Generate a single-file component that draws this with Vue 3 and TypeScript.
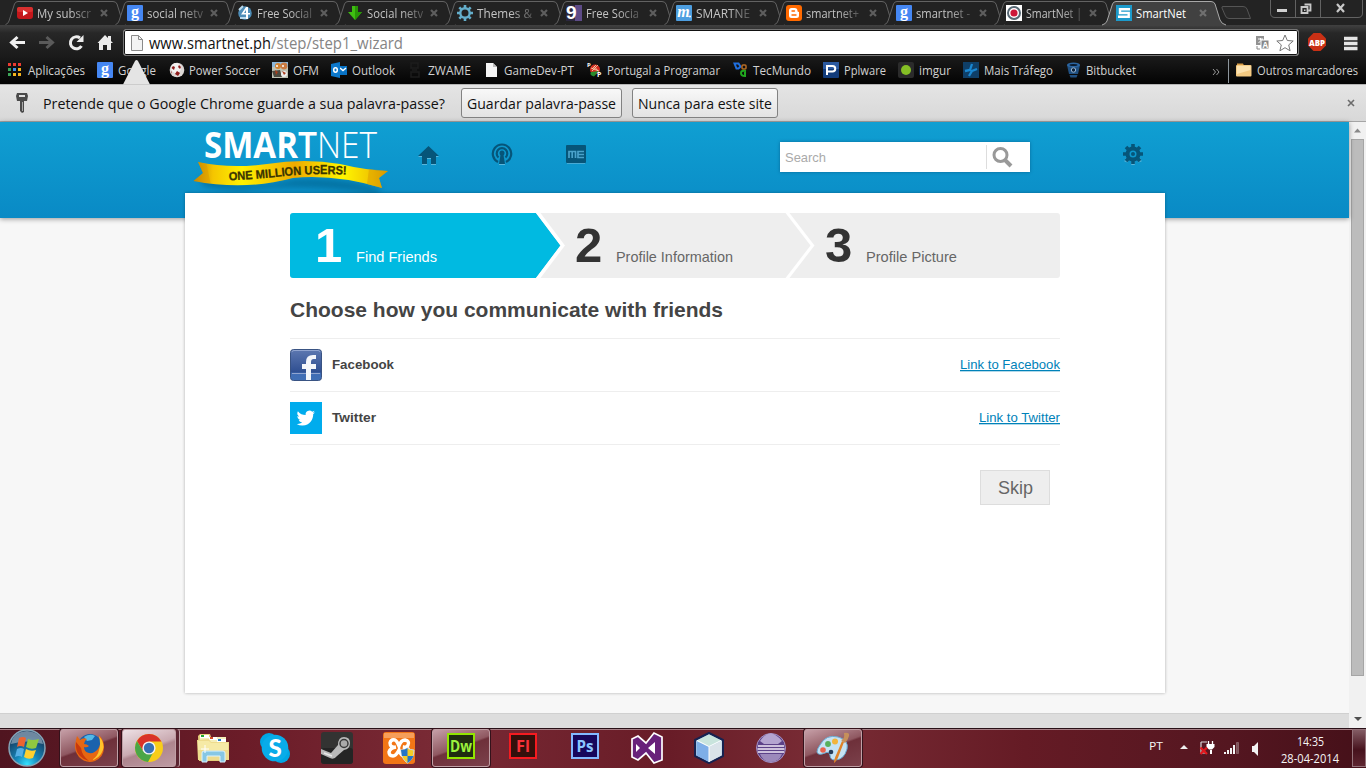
<script setup lang="ts">
import { h } from 'vue'

interface Tab { icon: string; title: string; w: number }
interface Bookmark { icon: string; title: string; w: number; slot: number; gap: number }
interface Task { icon: string; state: string }

/* Single line of text set to an exact measure */
const Fit = (p: { t: string; w: number; s: number }) =>
  h('svg', { class: 'fit', width: p.w, height: Math.round(p.s * 1.5) }, [
    h('text', { x: 0, y: Math.round(p.s * 1.15), 'font-size': p.s, textLength: p.w, lengthAdjust: 'spacingAndGlyphs' }, p.t),
  ])
Fit.props = ['t', 'w', 's']

const google = '<rect width="16" height="16" rx="1" fill="#4587f3"/><text x="8" y="11.500" font-family="Liberation Serif" font-weight="700" font-size="16" text-anchor="middle" fill="#fff">g</text>'

const icons: Record<string, string> = {
  google,
  youtube: '<rect y="2" width="16" height="12" rx="3" fill="#c4171b"/><rect y="2" width="16" height="5" rx="2" fill="#d8302f"/><path d="M6 5l5 3-5 3z" fill="#fff"/>',
  four: '<circle cx="8" cy="8" r="6.800" fill="#4d8db8"/><path d="M2 5l4-4M3 13h8" stroke="#b9d9ec" stroke-width="2"/><path d="M9 2L4 9.500h5V14h2V9.500h2V8h-2V2z" fill="#fff"/><path d="M9 5V8H7z" fill="#4d8db8"/>',
  down: '<path d="M5 1h6v6h4l-7 8-7-8h4z" fill="#3fbd12"/><path d="M8 1h3v6h4l-7 8z" fill="#289506"/>',
  cog: '<circle cx="8" cy="8" r="4.700" fill="none" stroke="#64aecb" stroke-width="2.400"/><path d="M8 0v3M8 13v3M0 8h3M13 8h3M2.300 2.300l2 2M11.700 11.700l2 2M2.300 13.700l2-2M11.700 4.300l2-2" stroke="#64aecb" stroke-width="2.600"/>',
  nine: '<path d="M0 0h16v16H0z" fill="#5d4b87"/><path d="M0 0h9v16H0z" fill="#2b2740"/><text x="0" y="14" font-family="Liberation Sans" font-weight="700" font-size="19" fill="#fff">9</text>',
  m: '<rect width="16" height="16" rx="1" fill="#4d9ee0"/><text x="7.500" y="12" font-family="Liberation Serif" font-style="italic" font-weight="700" font-size="16" text-anchor="middle" fill="#fff">m</text><circle cx="14" cy="11.500" r="1" fill="#fff"/>',
  blogger: '<rect width="16" height="16" rx="3" fill="#ff6a00"/><path d="M5.500 3h3A3 3 0 0 1 11.500 6q0 1 1.500 1v3.500A2.500 2.500 0 0 1 10.500 13h-5A2.500 2.500 0 0 1 3 10.500v-5A2.500 2.500 0 0 1 5.500 3z" fill="#fff"/><path d="M6 6h2.500M6 10h4" stroke="#ff6a00" stroke-width="1.400" stroke-linecap="round"/>',
  target: '<path d="M0 0h16v16H0z" fill="#fff"/><circle cx="8" cy="8" r="6" fill="#fff" stroke="#566773" stroke-width="2"/><circle cx="8" cy="8" r="3.600" fill="#cc1738"/>',
  smart: '<rect width="16" height="16" fill="#1c9acb"/><path d="M14 4.300H4v3.700h8.700v3.700H2" fill="none" stroke="#fff" stroke-width="2.400"/>',
  apps: '<path d="M0 1h3v3H0zM5 1h3v3H5zM10 1h3v3h-3z" fill="#ed3b31"/><path d="M0 6h3v3H0zM0 11h3v3H0z" fill="#3ca658"/><path d="M5 6h3v3H5z" fill="#3f8ee8"/><path d="M10 6h3v3h-3zM5 11h3v3H5zM10 11h3v3h-3z" fill="#f5b31d"/>',
  soccer: '<circle cx="8" cy="8" r="7.300" fill="#dcd7d5"/><circle cx="7" cy="6" r="5" fill="#f4f2f1"/><path d="M2.500 6l1.500-2 2 1-1 3zM10 3l2 2-1 2-2-2zM8 9l3 2-2 3-3-2zM2 9l1 1v2z" fill="#8e1c1c"/>',
  ofm: '<path d="M0 0h16v16H0z" fill="#bfc2b4"/><path d="M0 0h16v5H0z" fill="#8bb6d8"/><circle cx="6" cy="4" r="3" fill="#d38331"/><circle cx="12" cy="4" r="3.400" fill="#c97a42"/><path d="M0 9l8-1 2 7H2z" fill="#4c4b40"/><circle cx="12" cy="12" r="3" fill="#eee"/><path d="M3 8l3 2-2 3zM10 9l4 2-2 2z" fill="#a93e1d"/><circle cx="5" cy="4" r="1" fill="#fff"/><circle cx="11" cy="4" r="1" fill="#fff"/>',
  outlook: '<path d="M8 4h8v9H8z" fill="#0872c4"/><path d="M9 6l3 2.500L15 6" stroke="#fff" stroke-width="1.500" fill="none"/><path d="M0 2l9-2v16l-9-2z" fill="#0c78cb"/><ellipse cx="4.500" cy="8" rx="1.800" ry="2.200" fill="none" stroke="#fff" stroke-width="1.500"/>',
  zwame: '<path d="M3 1h7v5H3zM4 8h5M3 10h8v5H3z" fill="none" stroke="#1d1d1d" stroke-width="1.500"/>',
  page: '<path d="M1 1h7l4 4v10H1z" fill="#f4f4f4"/><path d="M8 1v4h4" fill="#bbb"/>',
  pap: '<circle cx="8" cy="7.500" r="5" fill="#d72c20"/><path d="M4 10q-2 3 3 4.500L12 9z" fill="#278b2c"/><path d="M4 6l8 3M5 9l6-6M7 4l4 5M9 3L5 7" stroke="#f4d9b4" stroke-width=".8"/><text x="0" y="5" font-size="6" font-weight="700" fill="#fff">P</text><text x="10" y="15" font-size="7" font-weight="700" fill="#fff">P</text>',
  tec: '<path d="M1.500 1.500h4l2 3-2 2h-2z" fill="none" stroke="#1f6fdf" stroke-width="2"/><rect x="9" y="3" width="4" height="4" rx="1" fill="none" stroke="#b96c24" stroke-width="1.500"/><path d="M13 9q-5-1-5 2t4 3V9" fill="none" stroke="#20a51e" stroke-width="2"/>',
  ppl: '<rect width="16" height="16" rx="1" fill="#123c7b"/><path d="M0 0h16v7H0z" fill="#2c5aa0"/><path d="M4 13V4h5.500a2.500 2.500 0 0 1 0 5.500H4" fill="none" stroke="#fff" stroke-width="2"/>',
  imgur: '<rect width="16" height="16" rx="2" fill="#2b2b2b"/><circle cx="8" cy="8" r="5" fill="#85bf25"/>',
  mais: '<path d="M0 0h16v16H0z" fill="#0f3f68"/><path d="M2 9l5-1 2-6M6 14l3-5 5-2" fill="none" stroke="#1a87d1" stroke-width="2.300"/>',
  bit: '<path d="M1 3l2 9h9l2-9z" fill="#205081"/><ellipse cx="7.500" cy="3" rx="6.500" ry="2.500" fill="#2b65a2"/><ellipse cx="7.500" cy="3" rx="4" ry="1" fill="#0a1b2f"/><circle cx="7.500" cy="8" r="2.200" fill="#0d223b" stroke="#9bb6d1"/><path d="M3.500 13h8l-1 2.500h-6z" fill="#205081"/>',
  folder: '<path d="M1 3.500V1.500h6l1 2z" fill="#d79b45"/><rect x="0" y="3" width="15.500" height="11.500" rx="1" fill="#f4ca82"/><path d="M1 4h13.500v4L1 12z" fill="#fde3b0"/>',
}

const tabs: Tab[] = [
  { icon: 'youtube', title: 'My subscr', w: 54 },
  { icon: 'google', title: 'social netv', w: 56 },
  { icon: 'four', title: 'Free Social', w: 55 },
  { icon: 'down', title: 'Social netv', w: 56 },
  { icon: 'cog', title: 'Themes &', w: 55 },
  { icon: 'nine', title: 'Free Socia', w: 53 },
  { icon: 'm', title: 'SMARTNE', w: 54 },
  { icon: 'blogger', title: 'smartnet+', w: 53 },
  { icon: 'google', title: 'smartnet -', w: 54 },
  { icon: 'target', title: 'SmartNet |', w: 56 },
]

const bookmarks: Bookmark[] = [
  { icon: 'apps', title: 'Aplicações', w: 57, slot: 89, gap: 4 },
  { icon: 'google', title: 'Google', w: 38, slot: 72, gap: 5 },
  { icon: 'soccer', title: 'Power Soccer', w: 71, slot: 103, gap: 4 },
  { icon: 'ofm', title: 'OFM', w: 26, slot: 59, gap: 5 },
  { icon: 'outlook', title: 'Outlook', w: 43, slot: 77, gap: 5 },
  { icon: 'zwame', title: 'ZWAME', w: 43, slot: 77, gap: 4 },
  { icon: 'page', title: 'GameDev-PT', w: 70, slot: 102, gap: 3 },
  { icon: 'pap', title: 'Portugal a Programar', w: 113, slot: 146, gap: 4 },
  { icon: 'tec', title: 'TecMundo', w: 58, slot: 90, gap: 4 },
  { icon: 'ppl', title: 'Pplware', w: 42, slot: 75, gap: 5 },
  { icon: 'imgur', title: 'imgur', w: 32, slot: 65, gap: 5 },
  { icon: 'mais', title: 'Mais Tráfego', w: 69, slot: 103, gap: 5 },
  { icon: 'bit', title: 'Bitbucket', w: 50, slot: 120, gap: 4 },
]

const adobe = (edge: string, fill: string, ink: string, label: string) =>
  `<rect x="3" y="2" width="26" height="24" fill="${fill}" stroke="${edge}" stroke-width="2"/><text x="16" y="20" text-anchor="middle" font-family="Open Sans" font-weight="700" font-size="16" textLength="${label === 'Fl' ? 14 : label === 'Ps' ? 17 : 22}" lengthAdjust="spacingAndGlyphs" fill="${ink}">${label}</text>`

const apps: Record<string, string> = {
  firefox: '<circle cx="17" cy="14" r="12" fill="#1b62ad"/><path d="M11 5q6-4 11-1l-3 4-5 1z" fill="#54b8e4"/><path d="M3 8q-3 10 3 17 7 7 16 4 9-4 9-14 0-7-5-12 3 9-1 14-4 5-9 4-5-1-5-6 3 1 5-1-2-2-5-2 0-3 3-5-4-2-7 1L4 4z" fill="#e66712"/><path d="M26 4q6 7 4 14-3 8-11 10 6-4 7-10 2-6 0-14z" fill="#ffc32b"/><path d="M3 10q-1 9 4 14 4 4 9 5-7-5-8-13z" fill="#c8390d"/>',
  chrome: '<circle cx="16" cy="16" r="14" fill="#f8cd19"/><path d="M16 2A14 14 0 0 1 28.400 9.500H16L10 19 4 9A14 14 0 0 1 16 2z" fill="#d93228"/><path d="M3.900 9A14 14 0 0 0 15 30l6-11-11 0z" fill="#4aa647"/><circle cx="16" cy="16" r="6.600" fill="#f3f3f3"/><circle cx="16" cy="16" r="5.200" fill="#3670b5"/>',
  explorer: '<path d="M1 4l2-2h10l1 3h15v24H2z" fill="#e5ce7a"/><path d="M3 5h26v20H3z" fill="#f5efba"/><path d="M3 3h9v3H3z" fill="#fff"/><path d="M4 3h3v2H4z" fill="#20a830"/><path d="M12 5h8v3h-8z" fill="#fff"/><path d="M13 5h3v2h-3z" fill="#d44c2a"/><path d="M20 7h9v3h-9z" fill="#fff"/><path d="M21 7h3v2h-3z" fill="#207ec9"/><path d="M0 8l12-1 2 3h18v18H1z" fill="#eedb8c"/><path d="M1 9h11l2 2h17v7H1z" fill="#f6eaa6"/><path d="M5 30V21q0-2 2-2h19q2 0 2 2v9h-5v-6H10v6z" fill="#87c7e4" stroke="#d9f3ff"/><path d="M8 13v8M4 17h8" stroke="#fff"/>',
  skype: '<circle cx="10" cy="10" r="9" fill="#00a6e4"/><circle cx="22" cy="22" r="9" fill="#00a6e4"/><circle cx="16" cy="16" r="13.300" fill="#08ace9"/><text x="16" y="24.500" text-anchor="middle" font-family="Lato" font-weight="900" font-size="24" fill="#fff">S</text>',
  steam: '<rect width="32" height="32" rx="3" fill="#333332"/><rect y="16" width="32" height="16" rx="3" fill="#242424"/><path d="M0 17l10 4 7-8q0-8 6-8t6 6-6 7l-7 6q-3 4-7 2l-9-4z" fill="#b9b9b9"/><circle cx="23" cy="11.500" r="4" fill="#aaa" stroke="#3b3b3b" stroke-width="1.500"/><path d="M3 21l8 3" stroke="#e8e8e8" stroke-width="1.500"/>',
  xampp: '<rect width="32" height="32" rx="3" fill="#f27516"/><path d="M1 1h30v5H1z" fill="#f69e5a"/><path d="M13 15q-6 1-6-4 1-4 5-3 2 1 4 6 2-6 6-6 5 1 3 5-1 3-5 2 6 0 6 5 0 4-5 4-3 0-5-6-3 6-6 6-4 0-4-4 1-4 7-5z" fill="none" stroke="#fff" stroke-width="3.400"/><path d="M18 18q4 0 6.500-2 2.500 2 6.500 2 0 9-6.500 13Q18 27 18 18z" fill="#f4cc25" stroke="#c9d8e7"/><path d="M24.500 16v8H19l-1-6q4 0 6.500-2zM24.500 24h6q-2 5-6 7z" fill="#2375c9"/>',
  dw: adobe('#92e600', '#202d10', '#9cf33d', 'Dw'),
  fl: adobe('#f51b20', '#34100b', '#f83239', 'Fl'),
  ps: adobe('#83b9ff', '#17075b', '#8ac6ff', 'Ps'),
  vs: '<path d="M1 7l6-3 8 7L23 1l8 4v23l-8 3-8-10-8 7-6-3z" fill="#68217a" stroke="#fff" stroke-width="1.700"/><path d="M5 12v8l4-4zM24 10v12l-7-6z" fill="#fff"/>',
  cube: '<path d="M16 1l14 7v16l-14 7L2 24V8z" fill="#b7d1e8" stroke="#172250" stroke-width="2" stroke-linejoin="round"/><path d="M16 2.500L28 8.500l-12 6-12-6z" fill="#c9e4dd"/><path d="M3.500 9L16 15v15L3.500 23.500z" fill="#7eaee8"/><path d="M28.500 9L16 15v15l12.500-6.500z" fill="#dae3e9"/><path d="M16 15v15M4 8.500l12 6 12-6" stroke="#fff" fill="none"/>',
  eclipse: '<circle cx="16" cy="16" r="14.500" fill="#5c4288" stroke="#a794c4"/><path d="M5 9Q15-6 27 9L23 12H9z" fill="#b4a5d0"/><path d="M3 14h26M2.500 17h27M3 20h26" stroke="#f2ecf8" stroke-width="1.300"/><path d="M5 22h22q-3 8-11 8T5 22z" fill="#9c89bb"/>',
  paint: '<path d="M3 13Q9 2 21 5q11 3 9 12-3 11-12 11-5 0-5-5-1-4-5-2-7 3-8-1 0-3 3-7z" fill="#c6e3f4" stroke="#6aadd5"/><circle cx="6" cy="18" r="2.800" fill="#e7634f"/><circle cx="11" cy="12" r="2.900" fill="#58b05c"/><circle cx="18" cy="9.500" r="3" fill="#f2b53c"/><circle cx="14" cy="20" r="2.300" fill="#243c5a"/><path d="M17 31q0-4 3-10l5-12 2 1-5 13q-2 6-5 8z" fill="#df8329"/><path d="M24 8q4-1 3-7 6-1 5 3-1 4-4 7z" fill="#c6905b"/>',
}

const tasks: Task[] = [
  { icon: 'firefox', state: 'open' },
  { icon: 'chrome', state: 'open lit' },
  { icon: 'explorer', state: '' },
  { icon: 'skype', state: '' },
  { icon: 'steam', state: '' },
  { icon: 'xampp', state: '' },
  { icon: 'dw', state: 'open' },
  { icon: 'fl', state: '' },
  { icon: 'ps', state: '' },
  { icon: 'vs', state: '' },
  { icon: 'cube', state: '' },
  { icon: 'eclipse', state: '' },
  { icon: 'paint', state: 'open' },
]
</script>

<template>
  <div class="screen">
    <header class="tabs">
      <div v-for="tab in tabs" :key="tab.title" class="tab">
        <svg class="shape" width="123" height="25"><path d="M.5 24.500Q3 24 4 21L9.500 4Q10.500 1.500 13 1.500H108Q111 1.500 112 4L117 20Q118.500 24 121 24.500" fill="#222" stroke="#626262" /></svg>
        <svg class="ico" width="16" height="16" v-html="icons[tab.icon]" />
        <Fit class="faded" :t="tab.title" :w="tab.w" :s="12" />
        <svg class="x" width="8" height="8"><path d="M1 1l6 6M7 1L1 7" stroke="#5e5e5e" stroke-width="2.200" /></svg>
      </div>
      <div class="tab active">
        <svg class="shape" width="125" height="26"><path d="M0 25Q4 24 5 21L10.500 4Q11.500 1.500 14 1.500H109Q112 1.500 113 4L118 20Q119.500 24 124 25V26H0z" fill="#414141" /><path d="M0 25Q4 24 5 21L10.500 4Q11.500 1.500 14 1.500H109Q112 1.500 113 4L118 20Q119.500 24 124 25" fill="none" stroke="#a8a8a8" /></svg>
        <svg class="ico" width="16" height="16" v-html="icons.smart" />
        <Fit class="title" t="SmartNet" :w="50" :s="12" />
        <svg class="x" width="8" height="8"><path d="M1 1l6 6M7 1L1 7" stroke="#707070" stroke-width="2.200" /></svg>
      </div>
      <svg class="newtab" width="32" height="16"><path d="M2 1.500H22Q25 1.500 26 4L29.500 13.500H8Q5 13.500 4 10L1 3Q.5 1.500 2 1.500z" fill="#292929" stroke="#555" /></svg>
      <svg class="wincontrols" width="93" height="19">
        <path d="M.5 0V13Q.5 17.500 5 17.500H88Q92.500 17.500 92.500 13V0M25.500 0V17M50.500 0V17" fill="none" stroke="#626262" />
        <path d="M7 9h10v3H7z" fill="#d0d0d0" />
        <path d="M34.500 4.500h6v6h-2M31.500 7h6v6h-6z" fill="none" stroke="#c8c8c8" stroke-width="1.800" /><path d="M34 9.500h1.500v1.500H34z" fill="#c8c8c8" />
        <path d="M67 4l7 8M74 4l-7 8" stroke="#c8c8c8" stroke-width="2.200" />
      </svg>
    </header>

    <div class="toolbar">
      <svg class="nav" width="112" height="30">
        <path d="M24 17.500H11M16.500 12l-6 5.500 6 5.500" fill="none" stroke="#f0f0f0" stroke-width="3" />
        <path d="M38 17.500H51M45.500 12l6 5.500-6 5.500" fill="none" stroke="#5a5a5a" stroke-width="3" />
        <path d="M80.500 21A6 6 0 1 1 79 13" fill="none" stroke="#ececec" stroke-width="3" /><path d="M82.500 10v7h-7z" fill="#ececec" />
        <path d="M96.500 18l7.500-8 3 3v-2h3v5l2 2h-2v7h-4v-5h-4v5h-4v-7z" fill="#ececec" />
      </svg>
      <div class="omnibox">
        <svg width="12" height="16"><path d="M.5.500h7l4 4v11H.5z" fill="#f3f3f3" stroke="#8a8a8a" /><path d="M7.500.500v4h4" fill="none" stroke="#8a8a8a" /></svg>
        <Fit class="host" t="www.smartnet.ph" :w="122" :s="15.500" />
        <Fit class="path" t="/step/step1_wizard" :w="132" :s="15.500" />
        <span class="grow"></span>
        <svg class="translate" width="15" height="15"><path d="M1 0h8v9H1z" fill="#929292" /><path d="M3 3h5M5.500 2v2M3.500 7l4-4" stroke="#fff" /><path d="M6 4h8v9H6z" fill="#888" stroke="#fff" /><text x="7.500" y="12" font-size="8" font-weight="700" fill="#fff">A</text><path d="M2 10v3h3" stroke="#888" fill="none" /></svg>
        <svg width="18" height="18"><path d="M9 1l2.300 5.500 5.900.500-4.500 3.900 1.400 5.900L9 13.700l-5.100 3.100 1.400-5.900L.8 7l5.900-.5z" fill="#fff" stroke="#777" /></svg>
      </div>
      <svg class="abp" width="18" height="18"><path d="M5.500 0h7L18 5.500v7L12.500 18h-7L0 12.500v-7z" fill="#c93015" /><text x="9" y="12.500" text-anchor="middle" font-family="Open Sans" font-weight="800" font-size="9.500" textLength="16" lengthAdjust="spacingAndGlyphs" fill="#fff">ABP</text></svg>
      <svg class="burger" width="14" height="16"><path d="M0 2.500h13.500M0 7.500h13.500M0 12.500h13.500" stroke="#e5e5e5" stroke-width="3.500" /></svg>
    </div>

    <div class="bookmarks">
      <div v-for="b in bookmarks" :key="b.title" class="bookmark" :style="{ width: b.slot + 'px', gap: b.gap + 'px' }">
        <svg class="ico" width="16" height="16" v-html="icons[b.icon]" />
        <Fit :t="b.title" :w="b.w" :s="12" />
      </div>
      <svg class="more" width="8" height="8"><path d="M1 1l2.500 3L1 7M4.500 1L7 4 4.500 7" fill="none" stroke="#999" /></svg>
      <div class="others">
        <svg class="ico" width="16" height="16" v-html="icons.folder" />
        <Fit t="Outros marcadores" :w="101" :s="12" />
      </div>
      <svg class="pointer" width="30" height="26"><path d="M1 25.500L13 2q1.500-2 3 0l12 23.500z" fill="#e4e4e4" /></svg>
    </div>

    <div class="infobar">
      <svg class="key" width="14" height="20"><path d="M2 0h10l1 3-1 5H9v11l-2 1-2-2V8H2L1 3z" fill="#4a4a4a" /><path d="M4 3h6" stroke="#ddd" stroke-width="2" /><path d="M7.500 9v9" stroke="#aaa" /></svg>
      <Fit class="question" t="Pretende que o Google Chrome guarde a sua palavra-passe?" :w="402" :s="15" />
      <button class="ibtn"><Fit t="Guardar palavra-passe" :w="149" :s="15" /></button>
      <button class="ibtn narrow"><Fit t="Nunca para este site" :w="134" :s="15" /></button>
      <svg class="dismiss" width="8" height="8"><path d="M1 1l6 6M7 1L1 7" stroke="#6b6b6b" stroke-width="1.600" /></svg>
    </div>

    <div class="viewport">
      <div class="page">
        <div class="hero">
          <svg class="logo" width="215" height="72">
            <defs>
              <linearGradient id="gold" x1="0" x2="1">
                <stop offset="0" stop-color="#b77c05" /><stop offset=".1" stop-color="#f5c500" /><stop offset=".25" stop-color="#fff200" /><stop offset=".52" stop-color="#eeaa00" /><stop offset=".77" stop-color="#fff600" /><stop offset=".92" stop-color="#f0c400" /><stop offset="1" stop-color="#d89b00" />
              </linearGradient>
              <filter id="soft"><feGaussianBlur stdDeviation="3" /></filter>
              <path id="wave" d="M44 58.500Q72 57 100 54T170 53" />
            </defs>
            <path d="M17 53Q60 69 110 57Q160 54 197 67L191 72Q120 61 60 68Q30 68 17 63z" fill="#04628e" opacity=".65" filter="url(#soft)" />
            <text y="36" font-family="Open Sans" font-size="36" fill="#fff"><tspan x="19" font-weight="700" textLength="94" lengthAdjust="spacingAndGlyphs">SMAR</tspan><tspan x="113" font-weight="600" textLength="19" lengthAdjust="spacingAndGlyphs">T</tspan><tspan x="132" font-weight="300" textLength="60" lengthAdjust="spacingAndGlyphs">NET</tspan></text>
            <path d="M13 40Q45 47 82 42Q120 36 155 42Q180 48 203 49L194 56L197 66Q150 52 108 56Q60 69 8.500 59L18 51z" fill="url(#gold)" />
            <path d="M13 40l5 11-9.500 8 17 2-4-19zM203 49l-9 7 3 10-15-4 2-15z" fill="#d99700" opacity=".45" />
            <text font-family="Liberation Sans" font-weight="700" font-size="12" fill="#3a3500" stroke="#3a3500" stroke-width=".3"><textPath href="#wave" textLength="118" lengthAdjust="spacingAndGlyphs">ONE MILLION USERS!</textPath></text>
          </svg>
          <svg class="home" width="22" height="20"><path d="M0 11L10.500 1 21 11h-3v8h-5v-6H9v6H4v-8z" fill="#58b6dc" transform="translate(0 1)" /><path d="M0 11L10.500 1 21 11h-3v8h-5v-6H9v6H4v-8z" fill="#065579" /></svg>
          <svg class="cast" width="22" height="24"><g fill="none" stroke="#065579" stroke-width="2.200"><path d="M7 20A9.200 9.200 0 1 1 15 20" /><path d="M7.500 15.500A5.300 5.300 0 1 1 14.500 15.500" /></g><circle cx="11" cy="11" r="2.500" fill="#065579" /><path d="M9.500 13h3l1.500 9H8z" fill="#065579" /><path d="M8 22.500h6" stroke="#58b6dc" /></svg>
          <svg class="me" width="20" height="19"><rect width="20" height="18" rx="1" fill="#065579" /><path d="M3 13V6.500h6.500V13M6.200 7v6M18 6.500h-6V12.500h6M12 9.500h6" fill="none" stroke="#4aa2ca" stroke-width="1.700" /><path d="M1 18.500h18" stroke="#48aad4" /></svg>
          <div class="search">
            <Fit class="ph" t="Search" :w="41" :s="13" />
            <svg class="lens" width="40" height="24"><path d="M.5 0v24" stroke="#ddd" /><circle cx="14.500" cy="10" r="6.500" fill="none" stroke="#999" stroke-width="3" /><path d="M19 15l6 6" stroke="#999" stroke-width="4" /></svg>
          </div>
          <svg class="gear" width="22" height="22"><g stroke="#56b4da" stroke-width="3.500"><path d="M10 15v6M4 15l-1 3M16 15l1 3" /></g><circle cx="10" cy="10" r="5.500" fill="none" stroke="#065579" stroke-width="4" /><path d="M10 0v4M10 16v4M0 10h4M16 10h4M3 3l3 3M14 14l3 3M3 17l3-3M14 6l3-3" stroke="#065579" stroke-width="3.600" /><circle cx="10" cy="10" r="2" fill="#065579" /></svg>
        </div>

        <main class="card">
          <div class="steps">
            <svg class="arrows" width="770" height="65">
              <rect width="770" height="65" rx="3" fill="#eee" />
              <path d="M3 0H246l24.500 32.500L246 65H3q-3 0-3-3V3q0-3 3-3z" fill="#00bae1" />
              <path d="M246 0h4.500l24.500 32.500L250.500 65H246l24.500-32.500z" fill="#fff" />
              <path d="M495.500 0h4l25 32.500-25 32.500h-4l25-32.500z" fill="#fff" />
            </svg>
            <div class="step on"><b>1</b><Fit t="Find Friends" :w="81" :s="15" /></div>
            <div class="step"><b>2</b><Fit t="Profile Information" :w="117" :s="15" /></div>
            <div class="step"><b>3</b><Fit t="Profile Picture" :w="91" :s="15" /></div>
          </div>
          <h1><Fit t="Choose how you communicate with friends" :w="433" :s="21" /></h1>
          <div class="service">
            <svg width="32" height="32"><defs><linearGradient id="fb" x2="0" y2="1"><stop stop-color="#5d78b1" /><stop offset=".73" stop-color="#2f4f91" /><stop offset=".76" stop-color="#3f6cb4" /><stop offset="1" stop-color="#416fb5" /></linearGradient></defs><rect x=".5" y=".5" width="31" height="31" rx="3" fill="url(#fb)" stroke="#395383" /><path d="M2 3q0-1.500 2-1.500h24q2 0 2 1.500M2 24.500h28" stroke="#91a5d0" fill="none" /><path d="M16 31V20h-4v-5h4v-2q0-7 7-7h3v4h-2.500Q21 10 21 13v2h5v5h-5v11z" fill="#f4f6fa" /></svg>
            <Fit class="name" t="Facebook" :w="62" :s="13" />
            <a href="#"><Fit t="Link to Facebook" :w="100" :s="13" /></a>
          </div>
          <div class="service">
            <svg width="32" height="32"><rect width="32" height="32" fill="#00aced" /><path d="M25 10.200q-1 .5-2 .6 1-.8 1.500-2-1 .6-2.300.9a3.800 3.800 0 0 0-6.500 3.400Q11 13 7.900 9.200q-1.700 3.200 1.200 5.200-1 0-1.800-.5.100 3 3.100 3.800-.9.200-1.800 0 .9 2.500 3.600 2.600-2.400 2-5.500 1.600 3 1.900 6 1.700c7 0 10.700-6 10.500-11.500q1.100-.8 1.800-1.900z" fill="#fff" /></svg>
            <Fit class="name" t="Twitter" :w="44" :s="13" />
            <a href="#"><Fit t="Link to Twitter" :w="81" :s="13" /></a>
          </div>
          <button class="skip"><Fit t="Skip" :w="35" :s="18" /></button>
        </main>
        <footer></footer>
      </div>
      <div class="scrollbar">
        <svg width="17" height="17"><path d="M5 10.500h7L8.500 6.500z" fill="#888" /></svg>
        <div class="thumb"></div>
        <svg width="17" height="17"><path d="M5 6h8l-4 4z" fill="#505050" /></svg>
      </div>
    </div>

    <div class="taskbar">
      <svg class="orb" width="38" height="38">
        <defs><radialGradient id="orbfill" cx=".5" cy=".95" r=".8"><stop stop-color="#35e2ff" /><stop offset=".4" stop-color="#1686b9" /><stop offset="1" stop-color="#163b5f" /></radialGradient></defs>
        <circle cx="19" cy="19" r="18" fill="url(#orbfill)" stroke="#86a4b6" stroke-width="1.500" /><path d="M3 15Q5 3 19 2q14 1 16 13-16-5-32 0z" fill="#b8c9d6" opacity=".55" />
        <path d="M11 9q4-2 7 0l-2 9q-4-2-7 0z" fill="#ed6430" /><path d="M20 10q4 2 11 0l-3 9q-5 2-10-1z" fill="#91c83f" /><path d="M9 20q4-2 7 0l-2 8q-3-2-7 0z" fill="#55aee4" /><path d="M18 20q5 3 10 1l-3 8q-5 2-9-1z" fill="#ffd02f" />
      </svg>
      <div v-for="t in tasks" :key="t.icon" class="slot">
        <div class="task" :class="t.state"><svg width="32" height="32" v-html="apps[t.icon]" /></div>
      </div>
      <div class="tray">
        <Fit class="lang" t="PT" :w="14" :s="11.500" />
        <svg class="icons" width="84" height="20">
          <path d="M1 11h8L5 7z" fill="#eee" />
          <path d="M22 4h6M22 4v11h5" fill="none" stroke="#d8d8d8" stroke-width="1.200" /><path d="M27.500 6h8v3l-2.500 2.500h-3L27.500 9zM31 11v5h2v-5z" fill="#fff" /><path d="M29.500 3v3M33.500 3v3" stroke="#fff" stroke-width="1.300" /><path d="M21.500 9.500l6.500 6.500M28 9.500L21.500 16" stroke="#e3181d" stroke-width="2.300" />
          <path d="M45 14h2v2h-2zM48 12h2v4h-2zM51 10h2v6h-2zM54 7h2v9h-2z" fill="#f4f4f4" /><path d="M57.500 4.500h2v11h-2z" fill="#7b5359" stroke="#9d7a80" stroke-width=".6" />
          <path d="M73 8h2l4-4v14l-4-4h-2z" fill="#f3f3f3" />
        </svg>
        <div class="clock"><Fit t="14:35" :w="27" :s="12" /><Fit t="28-04-2014" :w="58" :s="12" /></div>
        <div class="peek"></div>
      </div>
    </div>
  </div>
</template>

<style>
html, body { overflow: hidden; background: #f7f7f7; }
</style>

<style scoped>
.screen { width: 1366px; height: 768px; display: flex; flex-direction: column; font-family: "Open Sans", "Noto Sans", sans-serif; overflow: hidden; }
.screen * { box-sizing: border-box; }
svg { display: block; flex: none; overflow: visible; }
.fit { fill: currentColor; }
button { font: inherit; padding: 0; margin: 0; }
.grow { flex: 1; }

.tabs { height: 25px; flex: none; display: flex; background: #232323; padding-left: 5px; position: relative; z-index: 1; }
.tab { width: 109.9px; height: 25px; flex: none; position: relative; display: flex; align-items: flex-start; padding: 5px 0 0 12px; color: #c4c4c4; }
.shape { position: absolute; left: 0; top: 0; }
.tab .ico { position: relative; margin-right: 4px; }
.tab .fit { position: relative; top: -1px; }
.faded { mask-image: linear-gradient(90deg, #000 60%, rgba(0, 0, 0, .3)); }
.x { position: absolute; left: 95px; top: 9px; }
.active { color: #fff; width: 116px; margin-left: -2px; padding-left: 14px; }
.active .x { left: 97px; }
.newtab { margin: 5px 0 0 3px; }
.wincontrols { margin: 0 0 0 17px; }

.toolbar { height: 32px; flex: none; display: flex; background: linear-gradient(#414141, #272727 25%, #1a1a1a); }
.nav { margin: 0 10px 0 1px; }
.omnibox { width: 1176px; height: 27px; flex: none; margin-top: 4px; background: #fff; border: 1px solid #777; border-radius: 3px; box-shadow: inset 0 0 0 1px #111; display: flex; align-items: center; padding-left: 7px; }
.host { margin-left: 6px; color: #111; }
.path { color: #858585; }
.translate { margin-right: 6px; margin-top: 2px; }
.omnibox > svg:last-child { margin-right: 4px; }
.abp { margin: 8px 0 0 9px; }
.burger { margin: 11px 0 0 18px; }

.bookmarks { height: 27px; flex: none; display: flex; padding: 5px 0 0 8px; background: linear-gradient(#1a1a1a, #030303); color: #d1d1d1; position: relative; }
.bookmark, .others { display: flex; align-items: flex-start; flex: none; }
.bookmark .fit, .others .fit { position: relative; top: -1px; }
.more { margin: 6px 0 0 26px; }
.others { height: 24px; margin: -3px 0 0 8px; border-left: 1px solid #8d969d; padding: 3px 0 0 7px; gap: 5px; }
.pointer { position: absolute; left: 122px; top: 2px; }

.infobar { height: 38px; flex: none; display: flex; align-items: center; border-top: 1px solid #b5b5b5; border-bottom: 1px solid #a5a5a5; background: linear-gradient(#e4e4e4, #d8d8d8); color: #111; }
.key { margin: 0 14px 0 15px; }
.question { margin-right: 16px; }
.ibtn { width: 161px; height: 30px; border: 1px solid #828282; border-radius: 3px; background: linear-gradient(#f8f8f8, #e3e3e3); color: #111; display: flex; align-items: center; justify-content: center; margin-right: 10px; }
.narrow { width: 146px; }
.dismiss { margin-left: 559px; }

.viewport { height: 606px; flex: none; display: flex; }
.page { width: 1349px; height: 606px; background: #f7f7f7; position: relative; display: flex; flex-direction: column; font-family: "Liberation Sans", Arial, sans-serif; }
.hero { height: 96px; flex: none; display: flex; align-items: flex-start; background: linear-gradient(#109fd2, #098ac5); box-shadow: 0 1px 5px rgba(0, 0, 0, .4); }
.logo { margin-left: 185px; }
.home { margin: 23px 0 0 18px; }
.cast { margin: 20px 0 0 51px; }
.me { margin: 23px 0 0 53px; }
.search { width: 250px; height: 30px; margin: 20px 0 0 194px; background: #fff; display: flex; align-items: center; color: #aaa; box-shadow: 0 0 3px rgba(0, 60, 100, .5); }
.ph { margin-left: 5px; }
.lens { margin-left: 160px; }
.gear { margin: 22px 0 0 93px; }
.card { width: 980px; height: 500px; flex: none; margin: -25px 0 0 185px; padding: 20px 105px; background: #fff; box-shadow: 0 0 3px rgba(0, 0, 0, .3); position: relative; display: flex; flex-direction: column; }
.steps { height: 65px; display: flex; position: relative; color: #666; flex: none; }
.arrows { position: absolute; left: 0; top: 0; }
.step { position: relative; display: flex; width: 250px; padding-left: 25px; align-items: flex-start; }
.step b { font-size: 49px; line-height: 56px; width: 41px; color: #333; padding-top: 4px; }
.step .fit { margin-top: 32px; }
.on, .on b { color: #fff; }
.on { width: 260px; }
h1 { margin: 17px 0 0; height: 44px; font-size: 21px; line-height: 30px; font-weight: 700; color: #444; border-bottom: 1px solid #eee; flex: none; }
h1 .fit { margin-top: -2px; }
.service { height: 53px; flex: none; border-bottom: 1px solid #eee; display: flex; align-items: center; color: #444; }
.name { margin: -3px auto 0 10px; font-weight: 700; }
.service a { color: #0082b9; text-decoration: underline; margin-top: -3px; }
.service a .fit { text-decoration: underline; }
.skip { align-self: flex-end; width: 70px; height: 35px; margin: 25px 10px 0 0; border: 1px solid #ddd; background: #eee; color: #666; display: flex; align-items: center; justify-content: center; }
.skip .fit { margin-top: -2px; }
footer { height: 15px; flex: none; background: #ddd; border-top: 1px solid #d0d0d0; margin-top: auto; }

.scrollbar { width: 17px; background: #f1f1f1; display: flex; flex-direction: column; align-items: center; }
.thumb { width: 13px; height: 537px; background: #bcbcbc; border: 1px solid #a5a5a5; margin-bottom: 35px; }

.taskbar { height: 40px; flex: none; display: flex; background: linear-gradient(90deg, #501520, #6b1c28 18%, #792a35 32%, #681c27 49%, #792c35 60%, #651b25 75%, #541620 90%, #451019); border-top: 1px solid #281017; box-shadow: inset 0 1px #a78087; }
.orb { margin: 0 12px 0 8px; }
.slot { width: 62px; height: 39px; flex: none; display: flex; justify-content: center; padding-top: 0; }
.task { width: 58px; height: 38px; display: flex; justify-content: center; padding-top: 3px; border-radius: 3px; }
.open { border: 1px solid #c0a0a6; padding-top: 2px; background: linear-gradient(160deg, #c69fa7, #8f5861 46%, #6e303a 50%, #7b414b); box-shadow: 0 0 0 1px #34121b; }
.lit { width: 54px; margin-right: 4px; background: linear-gradient(160deg, #eee1e5, #caabb2 48%, #ae858e 55%, #be9ba3); box-shadow: 3px 0 0 #5b2531, 4px 0 0 #c0a0a6, 0 0 0 1px #34121b; }
.tray { margin-left: auto; display: flex; color: #f5f5f5; }
.lang { margin: 8px 16px 0 0; }
.icons { margin-top: 9px; }
.clock { margin: 3px 13px 0 18px; display: flex; flex-direction: column; align-items: center; }
.clock .fit { height: 17px; }
.peek { width: 14px; height: 38px; border: 1px solid #94727a; background: linear-gradient(#835c64, #46121d 55%, #5e2530); }
</style>
